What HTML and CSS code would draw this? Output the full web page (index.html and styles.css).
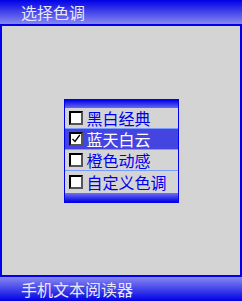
FILE: index.html
```html
<!DOCTYPE html>
<html>
<head>
<meta charset="utf-8">
<link rel="stylesheet" href="styles.css">
</head>
<body>
<div class="screen">
  <div class="title">选择色调</div>
  <div class="main">
    <div class="dialog">
      <div class="band top"></div>
      <div class="item"><span class="box"></span><span class="label">黑白经典</span></div>
      <div class="item selected"><span class="box"><svg viewBox="0 0 10 10" width="11" height="11"><path d="M1.5 5.5 L4 8 L8.8 1.5" fill="none" stroke="#000" stroke-width="1.3"/></svg></span><span class="label">蓝天白云</span></div>
      <div class="item"><span class="box"></span><span class="label">橙色动感</span></div>
      <div class="item last"><span class="box"></span><span class="label">自定义色调</span></div>
      <div class="band bottom"></div>
    </div>
  </div>
  <div class="footer">手机文本阅读器</div>
</div>
</body>
</html>
```

FILE: styles.css
```css
html, body { margin: 0; padding: 0; }
body { width: 242px; height: 301px; overflow: hidden; background: #d4d4d4; }
.screen {
  width: 242px; height: 301px;
  display: flex; flex-direction: column;
  font-family: "Noto Sans CJK SC", sans-serif;
}
.title {
  height: 24px;
  background: linear-gradient(#0000e6, #8888f0);
  color: #e8e8f8;
  font-size: 16px;
  line-height: 24px;
  padding-left: 21px;
  border-bottom: 2px solid #0000ee;
}
.main {
  flex: 1;
  background: #d4d4d4;
  border-left: 2px solid #0000ee;
  border-right: 2px solid #0000ee;
  display: flex; align-items: center; justify-content: center;
}
.dialog {
  width: 113px;
  border: 1px solid #0000ee;
  background: #d4d4d4;
  display: flex; flex-direction: column;
}
.band { height: 8px; }
.band.top { background: linear-gradient(#0000e6, #6868f0); }
.band.bottom { background: linear-gradient(#7070f0, #0000e6); height: 9px; }
.item {
  height: 20px;
  display: flex; align-items: center;
  border-bottom: 1px solid #7a9cff;
  color: #0000f0;
  font-size: 16px;
}
.item.last { border-bottom: none; height: 22px; }
.item.selected { background: #4444e0; color: #ffffff; }
.box {
  width: 10px; height: 10px;
  margin-left: 4px; margin-right: 4px;
  background: #ffffff;
  border: 2px solid #000;
  border-right-color: #555; border-bottom-color: #555;
  display: flex; align-items: center; justify-content: center;
}
.label { line-height: 20px; }
.footer {
  height: 24px;
  border-top: 2px solid #0000ee;
  background: linear-gradient(#8888f0, #0000e6);
  color: #e8e8f8;
  font-size: 16px;
  line-height: 24px;
  padding-left: 21px;
}
```
